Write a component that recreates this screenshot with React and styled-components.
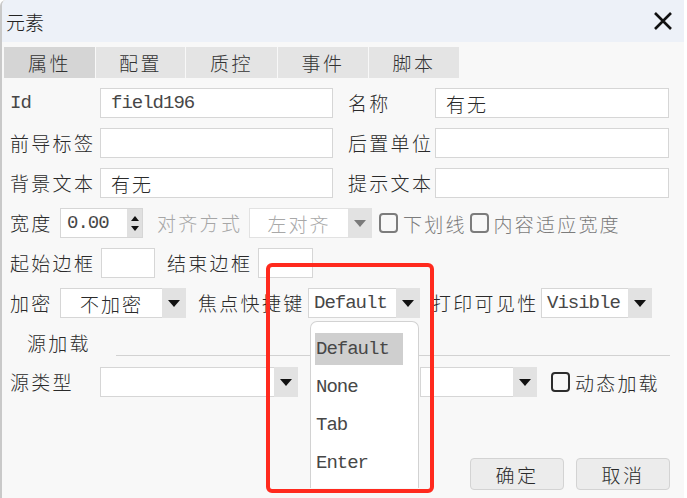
import React from "react";
import styled, { createGlobalStyle } from "styled-components";

const GlobalStyle = createGlobalStyle`
  html, body { margin: 0; padding: 0; background: #ffffff; }
  body { font-family: "Noto Sans CJK SC", "Noto Sans", sans-serif; font-weight: 300; color: #2a2a2a; }
  * { box-sizing: border-box; }
`;

const CJK = `"Noto Sans CJK SC", "Noto Sans", sans-serif`;
const MONO = `"Liberation Mono", "Noto Sans CJK SC", monospace`;
const MONO_COLOR = "#474747";
const MONO_SIZE = "19px";
const MONO_SPACING = "-1px";

const Page = styled.div`
  width: 687px;
  height: 498px;
  display: flex;
  background: #ffffff;
`;

const Dialog = styled.div`
  position: relative;
  width: 684px;
  height: 498px;
  background: #f8f8f8;
  border-left: 2px solid #c9c9c9;
  border-top-left-radius: 6px;
  display: flex;
  flex-direction: column;
  overflow: hidden;
`;

const TitleBar = styled.div`
  height: 42px;
  flex: none;
  background: #edf1f8;
  display: flex;
  align-items: center;
  justify-content: space-between;
  padding: 0 10px 0 4px;
  font-size: 19px;
  color: #222;
`;

const CloseButton = styled.div`
  width: 22px;
  height: 22px;
  display: flex;
  align-items: center;
  justify-content: center;
`;

const TabBar = styled.div`
  display: flex;
  gap: 1px;
  margin: 5px 0 0 2px;
  height: 31px;
  flex: none;
`;

const Tab = styled.div`
  width: ${(p) => p.$w}px;
  height: 31px;
  background: ${(p) => (p.$active ? "#d5d5d5" : "#e4e4e4")};
  display: flex;
  align-items: center;
  justify-content: center;
  font-size: 19px;
  letter-spacing: 2.5px;
  color: #333;
`;

const Form = styled.div`
  display: flex;
  flex-direction: column;
  gap: 10px;
  padding: 10px 0 0 6px;
`;

const Row = styled.div`
  display: flex;
  align-items: center;
  height: 30px;
`;

const Label = styled.div`
  width: ${(p) => p.$w}px;
  margin-left: ${(p) => p.$ml || 0}px;
  padding-left: ${(p) => p.$pl ?? 2}px;
  flex: none;
  font-family: ${(p) => (p.$mono ? MONO : CJK)};
  font-weight: ${(p) => (p.$mono ? 400 : 300)};
  font-size: ${(p) => (p.$mono ? MONO_SIZE : "19px")};
  letter-spacing: ${(p) => (p.$mono ? MONO_SPACING : "2.3px")};
  color: ${(p) => (p.$disabled ? "#a6a6a6" : p.$mono ? MONO_COLOR : "#2a2a2a")};
  white-space: nowrap;
  line-height: 30px;
`;

const TextBox = styled.div`
  width: ${(p) => p.$w}px;
  height: 30px;
  flex: none;
  background: #ffffff;
  border: 1px solid #d6d6d6;
  display: flex;
  align-items: center;
  padding-left: 10px;
  font-family: ${(p) => (p.$mono ? MONO : CJK)};
  font-weight: ${(p) => (p.$mono ? 400 : 300)};
  font-size: ${(p) => (p.$mono ? MONO_SIZE : "19px")};
  letter-spacing: ${(p) => (p.$mono ? MONO_SPACING : "2px")};
  color: ${(p) => (p.$mono ? MONO_COLOR : "#2a2a2a")};
  white-space: nowrap;
`;

const SpinBox = styled.div`
  width: ${(p) => p.$w}px;
  height: 30px;
  flex: none;
  display: flex;
  background: #ffffff;
  border: 1px solid #d6d6d6;
`;

const SpinValue = styled.div`
  flex: 1;
  display: flex;
  align-items: center;
  padding-left: 6px;
  font-family: ${MONO};
  font-weight: 400;
  font-size: ${MONO_SIZE};
  letter-spacing: ${MONO_SPACING};
  color: ${MONO_COLOR};
`;

const SpinArrows = styled.div`
  width: 15px;
  background: #e0e0e0;
  display: flex;
  flex-direction: column;
  align-items: center;
  justify-content: center;
  gap: 5px;
`;

const Tri = styled.span`
  width: 0;
  height: 0;
  border-left: ${(p) => p.$s}px solid transparent;
  border-right: ${(p) => p.$s}px solid transparent;
  ${(p) => (p.$up ? "border-bottom" : "border-top")}: ${(p) => p.$h}px solid ${(p) => p.$c || "#111"};
`;

const SelectBox = styled.div`
  width: ${(p) => p.$w}px;
  height: 30px;
  flex: none;
  display: flex;
  background: #ffffff;
  border: 1px solid ${(p) => (p.$disabled ? "#e2e2e2" : "#d6d6d6")};
  border-right: none;
`;

const SelectValue = styled.div`
  flex: 1;
  display: flex;
  align-items: center;
  justify-content: ${(p) => (p.$center ? "center" : "flex-start")};
  padding-left: ${(p) => (p.$center ? 0 : 5)}px;
  font-family: ${(p) => (p.$mono ? MONO : CJK)};
  font-weight: ${(p) => (p.$mono ? 400 : 300)};
  font-size: ${(p) => (p.$mono ? MONO_SIZE : "19px")};
  letter-spacing: ${(p) => (p.$mono ? MONO_SPACING : "2px")};
  color: ${(p) => (p.$disabled ? "#a8a8a8" : p.$mono ? MONO_COLOR : "#2a2a2a")};
  white-space: nowrap;
`;

const SelectArrow = styled.div`
  width: 24px;
  flex: none;
  background: #e2e2e2;
  display: flex;
  align-items: center;
  justify-content: center;
  margin: -1px 0;
`;

const Check = styled.div`
  width: 19px;
  height: 20px;
  flex: none;
  margin-left: ${(p) => p.$ml || 0}px;
  border: 2px solid ${(p) => (p.$disabled ? "#7c7c7c" : "#2c2c2c")};
  border-radius: 4px;
  background: transparent;
`;

const CheckLabel = styled.div`
  margin-left: 5px;
  font-size: 19px;
  letter-spacing: 2.2px;
  color: ${(p) => (p.$disabled ? "#7c7c7c" : "#2a2a2a")};
  white-space: nowrap;
`;

const Spacer = styled.div`
  width: ${(p) => p.$w}px;
  margin-left: ${(p) => p.$ml || 0}px;
  flex: none;
`;

const GroupHeader = styled.div`
  display: flex;
  height: 29px;
  align-items: center;
`;

const GroupTitle = styled.div`
  padding-left: 19px;
  font-size: 19px;
  letter-spacing: 2.2px;
  color: #2a2a2a;
  flex: none;
`;

const GroupLine = styled.div`
  flex: 1;
  align-self: flex-end;
  margin: 0 14px 1px 25px;
  height: 1px;
  background: #d2d2d2;
`;

const Footer = styled.div`
  margin-top: auto;
  display: flex;
  justify-content: flex-end;
  gap: 12px;
  padding: 0 14px 8px 0;
`;

const Button = styled.div`
  width: 94px;
  height: 32px;
  background: #ececec;
  border: 1px solid #d3d3d3;
  border-radius: 4px;
  display: flex;
  align-items: center;
  justify-content: center;
  font-size: 19px;
  letter-spacing: 2.5px;
  color: #2a2a2a;
`;

const DropList = styled.div`
  position: absolute;
  left: 308px;
  top: 321px;
  width: 109px;
  height: 167px;
  background: #ffffff;
  border: 1px solid #d2d2d2;
  border-bottom: none;
  border-radius: 7px 7px 0 0;
  padding: 11px 15px 0 4px;
  display: flex;
  flex-direction: column;
  gap: 6px;
`;

const DropItem = styled.div`
  height: 32px;
  display: flex;
  align-items: center;
  padding-left: 1px;
  background: ${(p) => (p.$active ? "#cfcfcf" : "transparent")};
  font-family: ${MONO};
  font-weight: 400;
  font-size: ${MONO_SIZE};
  letter-spacing: ${MONO_SPACING};
  color: ${MONO_COLOR};
`;

const Annotation = styled.div`
  position: absolute;
  left: 264px;
  top: 263px;
  width: 168px;
  height: 230px;
  border: 4px solid #ff2a1e;
  border-radius: 6px;
  pointer-events: none;
`;

const Select = ({ w, value, mono, center, disabled }) => (
  <SelectBox $w={w} $disabled={disabled}>
    <SelectValue $mono={mono} $center={center} $disabled={disabled}>
      {value}
    </SelectValue>
    <SelectArrow>
      <Tri $s={6} $h={7} $c={disabled ? "#7a7a7a" : "#111"} />
    </SelectArrow>
  </SelectBox>
);

export default function App() {
  return (
    <>
      <GlobalStyle />
      <Page>
        <Dialog>
          <TitleBar>
            <span>元素</span>
            <CloseButton>
              <svg width="20" height="20" viewBox="0 0 20 20">
                <path d="M2 2 L18 18 M18 2 L2 18" stroke="#111" strokeWidth="2.6" strokeLinecap="butt" />
              </svg>
            </CloseButton>
          </TitleBar>
          <TabBar>
            <Tab $w={91} $active>属性</Tab>
            <Tab $w={89}>配置</Tab>
            <Tab $w={91}>质控</Tab>
            <Tab $w={90}>事件</Tab>
            <Tab $w={90}>脚本</Tab>
          </TabBar>
          <Form>
            <Row>
              <Label $w={92} $mono>Id</Label>
              <TextBox $w={233} $mono>field196</TextBox>
              <Label $w={89} $ml={13}>名称</Label>
              <TextBox $w={234}>有无</TextBox>
            </Row>
            <Row>
              <Label $w={92}>前导标签</Label>
              <TextBox $w={233} />
              <Label $w={89} $ml={13}>后置单位</Label>
              <TextBox $w={234} />
            </Row>
            <Row>
              <Label $w={92}>背景文本</Label>
              <TextBox $w={233}>有无</TextBox>
              <Label $w={89} $ml={13}>提示文本</Label>
              <TextBox $w={234} />
            </Row>
            <Row>
              <Label $w={52}>宽度</Label>
              <SpinBox $w={83}>
                <SpinValue>0.00</SpinValue>
                <SpinArrows>
                  <Tri $up $s={4} $h={5} />
                  <Tri $s={4} $h={5} />
                </SpinArrows>
              </SpinBox>
              <Label $w={92} $ml={14} $pl={0} $disabled>对齐方式</Label>
              <Select w={123} value="左对齐" center disabled />
              <Check $ml={7} $disabled />
              <CheckLabel $disabled>下划线</CheckLabel>
              <Check $ml={3} $disabled />
              <CheckLabel $disabled>内容适应宽度</CheckLabel>
            </Row>
            <Row>
              <Label $w={93}>起始边框</Label>
              <TextBox $w={54} />
              <Label $w={91} $ml={12} $pl={0}>结束边框</Label>
              <TextBox $w={55} />
            </Row>
            <Row>
              <Label $w={52}>加密</Label>
              <Select w={126} value="不加密" center />
              <Label $w={110} $ml={12} $pl={0}>焦点快捷键</Label>
              <Select w={112} value="Default" mono />
              <Label $w={109} $ml={12} $pl={0}>打印可见性</Label>
              <Select w={111} value="Visible" mono />
            </Row>
            <GroupHeader>
              <GroupTitle>源加载</GroupTitle>
              <GroupLine />
            </GroupHeader>
            <Row>
              <Label $w={92}>源类型</Label>
              <Select w={198} value="" />
              <Spacer $w={110} $ml={12} />
              <Select w={117} value="" />
              <Check $ml={14} />
              <CheckLabel>动态加载</CheckLabel>
            </Row>
          </Form>
          <Footer>
            <Button>确定</Button>
            <Button>取消</Button>
          </Footer>
          <DropList>
            <DropItem $active>Default</DropItem>
            <DropItem>None</DropItem>
            <DropItem>Tab</DropItem>
            <DropItem>Enter</DropItem>
          </DropList>
          <Annotation />
        </Dialog>
      </Page>
    </>
  );
}
